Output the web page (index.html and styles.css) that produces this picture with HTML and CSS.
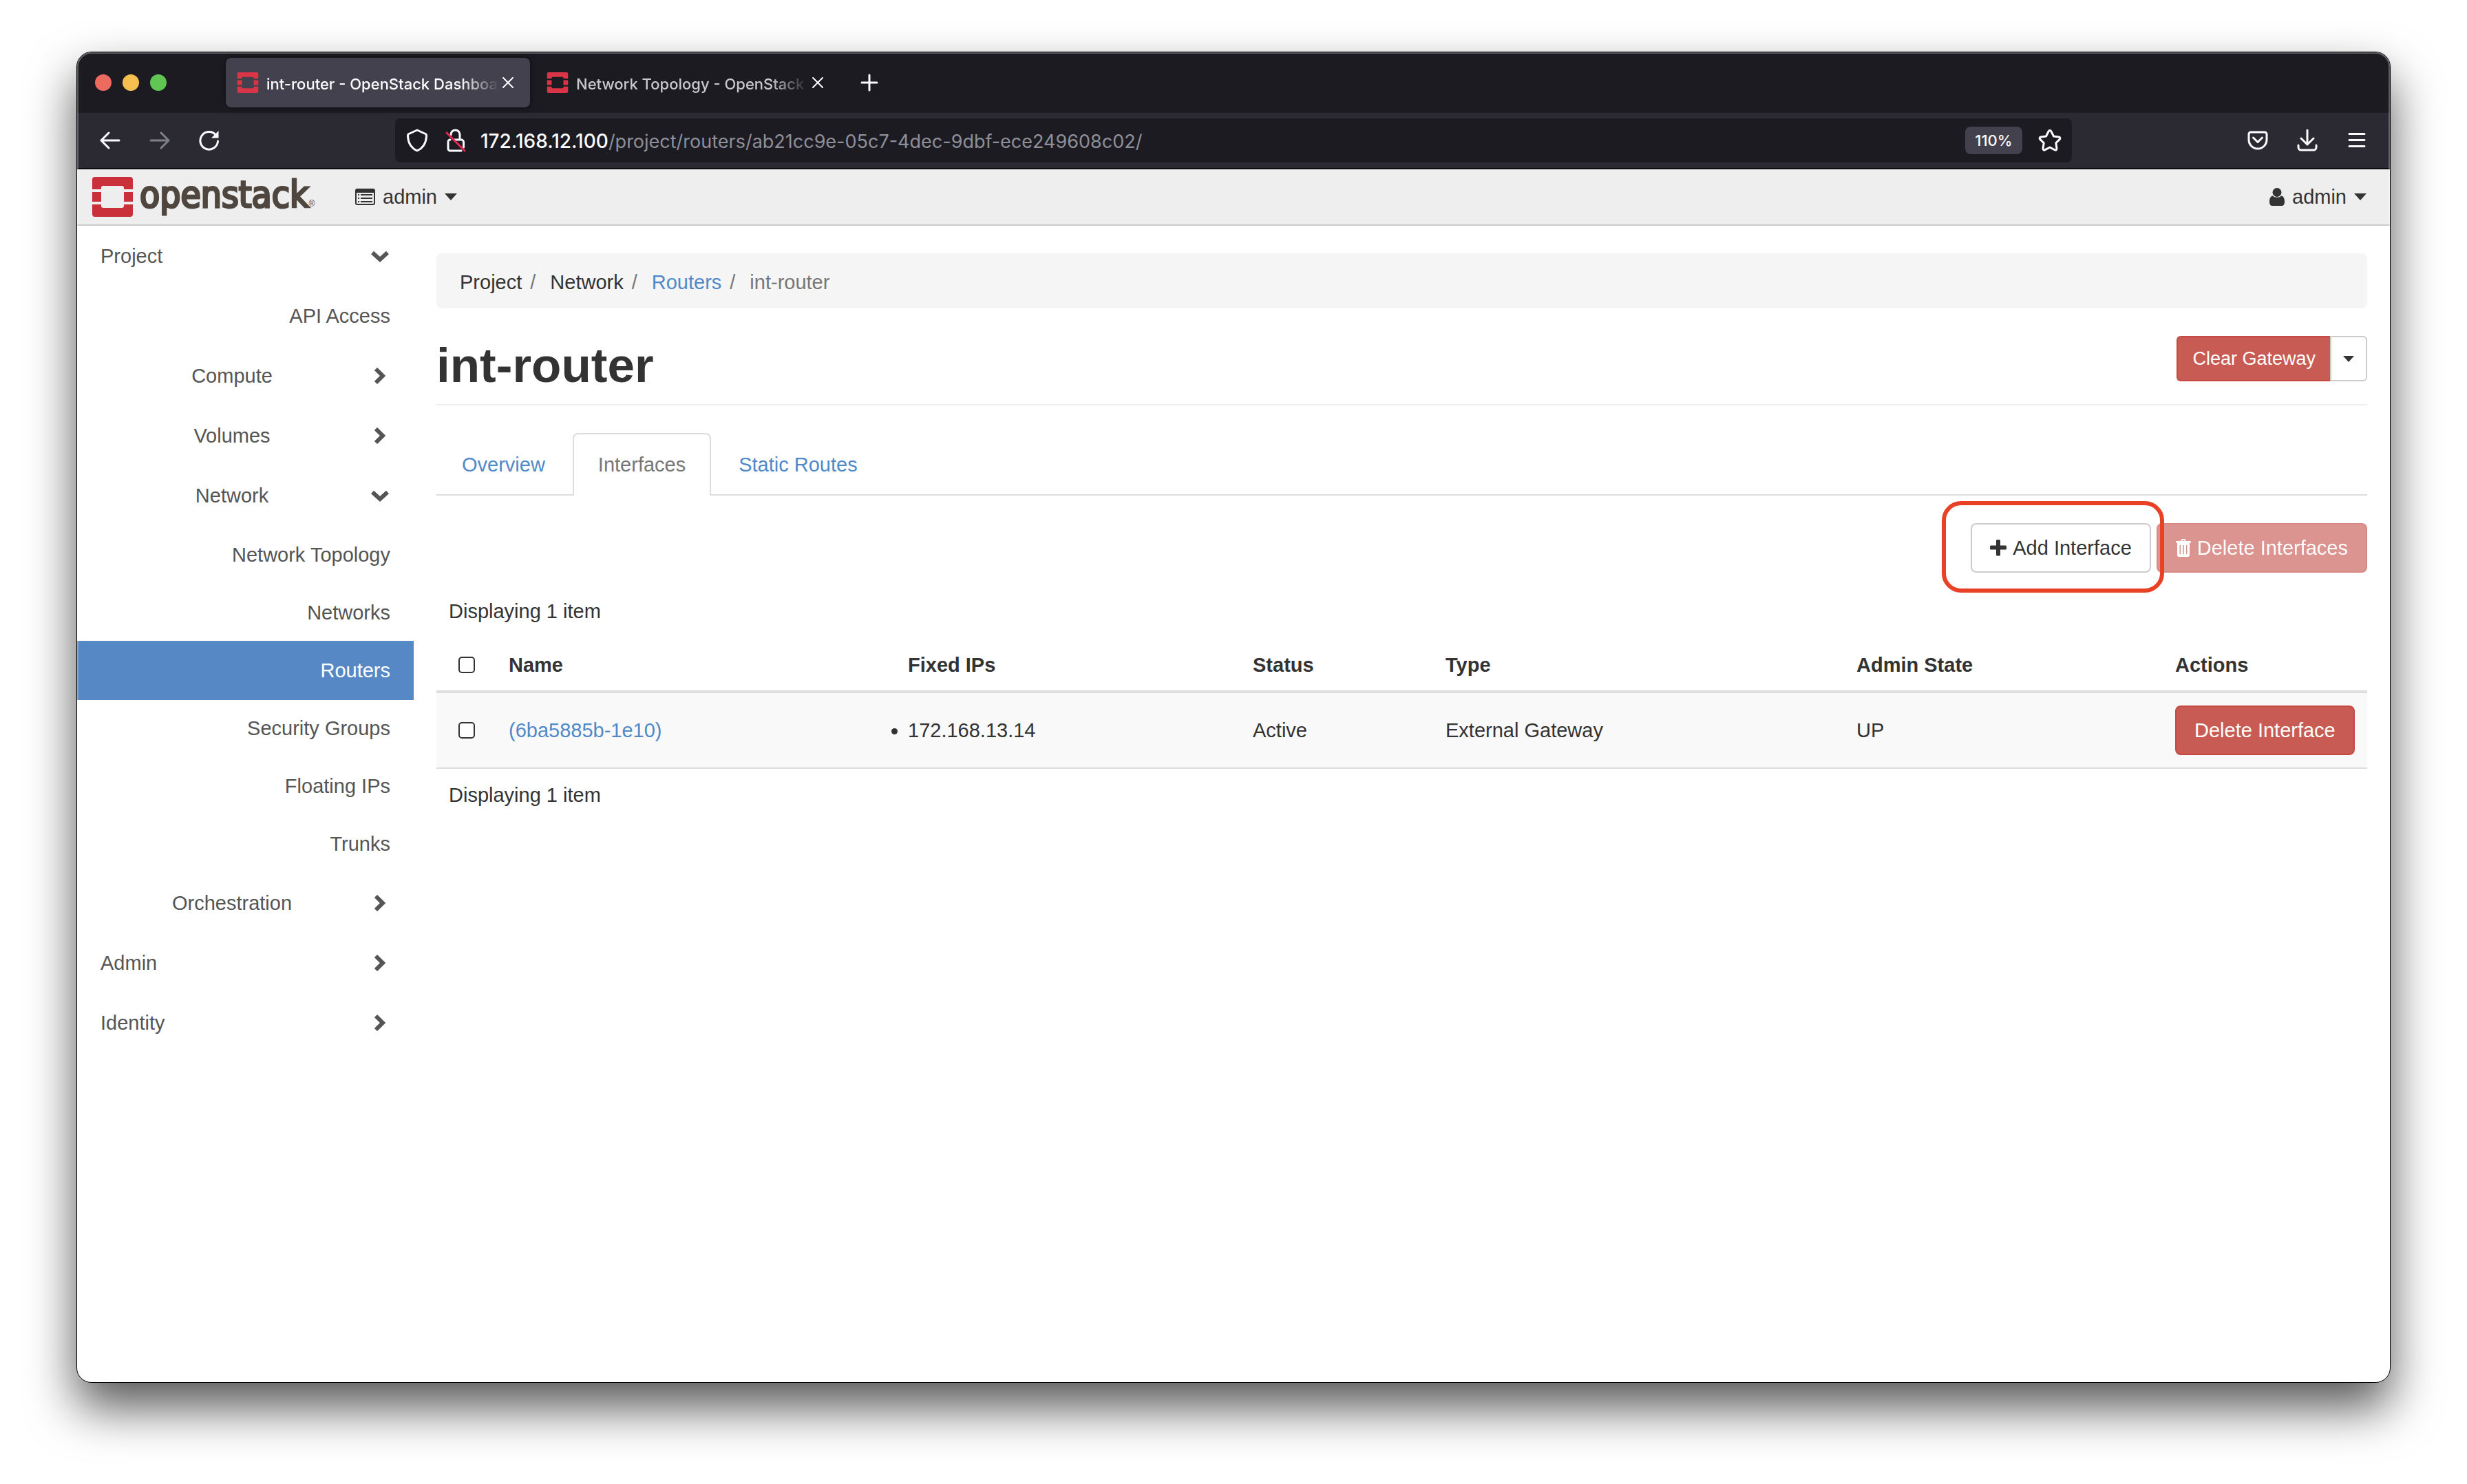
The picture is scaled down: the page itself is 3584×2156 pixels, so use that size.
FILE: index.html
```html
<!DOCTYPE html>
<html lang="en">
<head>
<meta charset="utf-8">
<title>int-router - OpenStack Dashboard</title>
<link rel="stylesheet" href="styles.css">
</head>
<body>
<svg class="sprite" aria-hidden="true">
  <symbol id="os-mark" viewBox="0 0 59 58">
    <path d="M4 0H55a4 4 0 0 1 4 4V18H46V16a3 3 0 0 0-3-3H16a3 3 0 0 0-3 3V18H0V4a4 4 0 0 1 4-4ZM0 22H13V36H0ZM46 22H59V36H46ZM0 40H13V42a3 3 0 0 0 3 3H43a3 3 0 0 0 3-3V40H59V54a4 4 0 0 1-4 4H4a4 4 0 0 1-4-4Z"/>
  </symbol>
  <symbol id="close" viewBox="0 0 16 16"><path d="M1 1L15 15M15 1L1 15" fill="none" stroke="currentColor" stroke-width="2" stroke-linecap="round"/></symbol>
  <symbol id="caret" viewBox="0 0 18 10"><path d="M0 0H18L9 10Z"/></symbol>
  <symbol id="chev-right" viewBox="0 0 26 26"><path d="M7 3L17 13L7 23" fill="none" stroke="currentColor" stroke-width="6"/></symbol>
  <symbol id="chev-down" viewBox="0 0 26 26"><path d="M2 8L13 18L24 8" fill="none" stroke="currentColor" stroke-width="6"/></symbol>
</svg>
<div class="window">
  <div class="tabstrip">
    <div class="lights"><span class="light red"></span><span class="light amber"></span><span class="light green"></span></div>
    <div class="tab current">
      <svg class="favicon"><use href="#os-mark"/></svg>
      <span class="tab-title">int-router - OpenStack Dashboard</span>
      <button class="tab-close" aria-label="Close tab"><svg><use href="#close"/></svg></button>
    </div>
    <div class="tab">
      <svg class="favicon"><use href="#os-mark"/></svg>
      <span class="tab-title">Network Topology - OpenStack Dashboard</span>
      <button class="tab-close" aria-label="Close tab"><svg><use href="#close"/></svg></button>
    </div>
    <button class="new-tab" aria-label="New tab"><svg width="26" height="26" viewBox="0 0 26 26"><path d="M13 2V24M2 13H24"/></svg></button>
  </div>

  <div class="toolbar">
    <div class="nav-buttons">
      <button aria-label="Back"><svg width="32" height="32" viewBox="0 0 32 32"><path d="M29 16H3M14 5L3 16L14 27"/></svg></button>
      <button aria-label="Forward" disabled><svg width="32" height="32" viewBox="0 0 32 32"><path d="M3 16H29M18 5L29 16L18 27"/></svg></button>
      <button aria-label="Reload"><svg width="32" height="32" viewBox="0 0 32 32"><path d="M28.500 17A12.800 12.800 0 1 1 25 7.500"/><path d="M29.500 2V12.500H19Z" fill="#fbfbfe" stroke="none"/></svg></button>
    </div>
    <div class="urlbar">
      <svg width="32" height="36" viewBox="0 0 32 36"><path d="M16 3L28 8.500C29.500 9 29.600 10.500 29.500 12C29 21 25 29 16 33C7 29 3 21 2.500 12C2.400 10.500 2.500 9 4 8.500Z"/></svg>
      <svg width="32" height="36" viewBox="0 0 32 36"><path d="M9 10V9.500A6.500 6.500 0 0 1 22 9.500V17M14 17H24A3.500 3.500 0 0 1 27.500 20.500V28M24 33H8A3 3 0 0 1 5 30V20A3 3 0 0 1 8 17"/><path class="slash" d="M3 7L29 33"/></svg>
      <div class="url" role="textbox" aria-label="Address"><span class="host">172.168.12.100</span>/project/routers/ab21cc9e-05c7-4dec-9dbf-ece249608c02/</div>
      <button class="zoom">110%</button>
      <button class="star" aria-label="Bookmark"><svg width="36" height="36" viewBox="0 0 36 36"><path d="M18 3.500C19 3.500 19.500 4 20 5L23.500 12L31 13C33 13.400 33.600 15 32 16.600L26.800 21.800L28 29.500C28.200 31.700 26.800 32.700 25 31.700L18 28L11 31.700C9.200 32.700 7.800 31.700 8 29.500L9.200 21.800L4 16.600C2.400 15 3 13.400 5 13L12.500 12L16 5C16.500 4 17 3.500 18 3.500Z"/></svg></button>
    </div>
    <div class="tools">
      <button aria-label="Save to Pocket"><svg width="32" height="32" viewBox="0 0 32 32"><path d="M6 4H26A3 3 0 0 1 29 7V15A13 13 0 0 1 3 15V7A3 3 0 0 1 6 4ZM9.500 12L16 18.500L22.500 12"/></svg></button>
      <button aria-label="Downloads"><svg width="32" height="32" viewBox="0 0 32 32"><path d="M16 1V21M7 13L16 22L25 13M3 23V26A4 4 0 0 0 7 30H25A4 4 0 0 0 29 26V23"/></svg></button>
      <button aria-label="Menu"><svg width="32" height="32" viewBox="0 0 32 32"><path d="M5 6.500H27M5 15.500H27M5 24.500H27"/></svg></button>
    </div>
  </div>

  <header class="topbar">
    <a class="brand" href="#"><svg class="brand-mark"><use href="#os-mark"/></svg><span class="wordmark">openstack</span><span class="reg">®</span></a>
    <button class="picker"><svg width="29" height="24" viewBox="0 0 29 24"><path fill-rule="evenodd" d="M3 0H26A3 3 0 0 1 29 3V21A3 3 0 0 1 26 24H3A3 3 0 0 1 0 21V3A3 3 0 0 1 3 0ZM2 6V21A1 1 0 0 0 3 22H26A1 1 0 0 0 27 21V6Z"/><path d="M4 8H6V10H4ZM4 13H6V15H4ZM4 18H6V20H4ZM8 8H25V10H8ZM8 13H25V15H8ZM8 18H25V20H8Z"/></svg>admin<svg class="caret"><use href="#caret"/></svg></button>
    <button class="picker user"><svg width="22" height="26" viewBox="0 0 22 26"><circle cx="11" cy="6.500" r="6.500"/><path d="M5 11.500C7 14.500 15 14.500 17 11.500C21 12 22 16 22 20.500C22 24 20.500 26 18 26H4C1.500 26 0 24 0 20.500C0 16 1 12 5 11.500Z"/></svg>admin<svg class="caret"><use href="#caret"/></svg></button>
  </header>

  <div class="layout">
    <nav class="sidebar">
      <a class="top" href="#">Project<svg><use href="#chev-down"/></svg></a>
      <a class="leaf tall" href="#">API Access</a>
      <a class="group" href="#"><span>Compute</span><svg><use href="#chev-right"/></svg></a>
      <a class="group" href="#"><span>Volumes</span><svg><use href="#chev-right"/></svg></a>
      <a class="group" href="#"><span>Network</span><svg><use href="#chev-down"/></svg></a>
      <a class="leaf" href="#">Network Topology</a>
      <a class="leaf" href="#">Networks</a>
      <a class="leaf active" href="#">Routers</a>
      <a class="leaf" href="#">Security Groups</a>
      <a class="leaf" href="#">Floating IPs</a>
      <a class="leaf" href="#">Trunks</a>
      <a class="group" href="#"><span>Orchestration</span><svg><use href="#chev-right"/></svg></a>
      <a class="top" href="#">Admin<svg><use href="#chev-right"/></svg></a>
      <a class="top" href="#">Identity<svg><use href="#chev-right"/></svg></a>
    </nav>

    <main>
      <ol class="breadcrumb">
        <li>Project</li>
        <li>Network</li>
        <li><a href="#">Routers</a></li>
        <li class="here">int-router</li>
      </ol>
      <div class="page-header">
        <h1>int-router</h1>
        <div class="split"><button class="btn small danger">Clear Gateway</button><button class="btn small toggle" aria-label="More actions"><svg><use href="#caret"/></svg></button></div>
      </div>
      <ul class="tabs">
        <li><a href="#">Overview</a></li>
        <li class="active"><a href="#">Interfaces</a></li>
        <li><a href="#">Static Routes</a></li>
      </ul>
      <div class="actions">
        <div class="marked"><button class="btn"><svg width="24" height="24" viewBox="0 0 24 24"><path d="M9 1.500A1.500 1.500 0 0 1 10.500 0H13.500A1.500 1.500 0 0 1 15 1.500V8.500H22.500A1.500 1.500 0 0 1 24 10V13A1.500 1.500 0 0 1 22.500 14.500H15V22A1.500 1.500 0 0 1 13.500 23.500H10.500A1.500 1.500 0 0 1 9 22V14.500H1.500A1.500 1.500 0 0 1 0 13V10A1.500 1.500 0 0 1 1.500 8.500H9Z"/></svg>Add Interface</button></div>
        <button class="btn danger" disabled><svg width="22" height="26" viewBox="0 0 22 26"><path fill-rule="evenodd" d="M7 3L8 1Q8.500 0 10 0H12Q13.500 0 14 1L15 3H21Q22 3 22 4V5.500H20V23Q20 26 17.500 26H4.500Q2 26 2 23V5.500H0V4Q0 3 1 3ZM9 3H13L12.500 2H9.500ZM5.500 9V22H7V9ZM10.200 9V22H11.800V9ZM15 9V22H16.500V9Z"/></svg>Delete Interfaces</button>
      </div>
      <p class="count">Displaying 1 item</p>
      <table>
        <colgroup><col class="c-check"><col class="c-name"><col class="c-ips"><col class="c-status"><col class="c-type"><col class="c-admin"><col class="c-actions"></colgroup>
        <thead>
          <tr><th><input type="checkbox" aria-label="Select all"></th><th>Name</th><th>Fixed IPs</th><th>Status</th><th>Type</th><th>Admin State</th><th>Actions</th></tr>
        </thead>
        <tbody>
          <tr><td><input type="checkbox" aria-label="Select (6ba5885b-1e10)"></td><td><a href="#">(6ba5885b-1e10)</a></td><td><ul class="ips"><li>172.168.13.14</li></ul></td><td>Active</td><td>External Gateway</td><td>UP</td><td><button class="btn danger">Delete Interface</button></td></tr>
        </tbody>
      </table>
      <p class="count foot">Displaying 1 item</p>
    </main>
  </div>
</div>
</body>
</html>
```
FILE: styles.css
```css
* { box-sizing: border-box; }
body {
  margin: 0;
  min-height: 100vh;
  padding: 75px 111px 147px;
  display: flex;
  background: #fff;
  color: #333;
  font: 29px/44px "Liberation Sans", Arial, sans-serif;
}
button { margin: 0; padding: 0; border: 0; background: none; color: inherit; font: inherit; display: flex; align-items: center; justify-content: center; }
a { color: #5089c8; text-decoration: none; }
ul, ol { list-style: none; margin: 0; padding: 0; }
svg { flex: none; fill: currentColor; }
.sprite { position: absolute; width: 0; height: 0; }

.window {
  flex: 1;
  min-width: 0;
  position: relative;
  border: 1px solid #000;
  border-radius: 22px;
  background: #fff;
  overflow: hidden;
  box-shadow: 0 36px 70px rgba(0, 0, 0, .66);
}
.window::after {
  content: "";
  position: absolute;
  inset: 0;
  border: 2px solid rgba(255, 255, 255, .28);
  border-radius: 21px;
  pointer-events: none;
}

/* browser chrome */
.tabstrip {
  height: 88px;
  display: flex;
  align-items: center;
  padding-left: 26px;
  background: #1c1b22;
  color: #fbfbfe;
  font: 500 22px/32px Inter, sans-serif;
}
.lights { display: flex; gap: 16px; width: 190px; }
.light { width: 24px; height: 24px; border-radius: 50%; }
.red { background: #ed6a5e; }
.amber { background: #f5bf4f; }
.green { background: #61c554; }
.tab {
  width: 442px;
  height: 72px;
  display: flex;
  align-items: center;
  padding: 0 24px 0 16px;
  margin-right: 8px;
  border-radius: 8px;
  color: #c8c8cc;
}
.tab.current { background: #42414d; color: #fbfbfe; box-shadow: 0 0 8px rgba(0, 0, 0, .5); }
.favicon { width: 32px; height: 30px; margin-right: 11px; color: #da3447; }
.tab-title {
  flex: 1;
  min-width: 0;
  padding-top: 3px;
  overflow: hidden;
  white-space: nowrap;
  -webkit-mask-image: linear-gradient(to left, transparent, #000 56px);
  mask-image: linear-gradient(to left, transparent, #000 56px);
}
.tab-close { color: #fbfbfe; margin-left: 4px; }
.tab-close svg { width: 16px; height: 16px; }
.new-tab { margin-left: 22px; }

.toolbar {
  height: 82px;
  display: flex;
  align-items: center;
  padding: 0 32px;
  border-bottom: 2px solid #0c0c0d;
  background: #2b2a33;
  color: #fbfbfe;
}
.toolbar svg, .new-tab svg { fill: none; stroke: currentColor; stroke-width: 3; stroke-linecap: round; stroke-linejoin: round; }
.toolbar .slash { stroke: #e22850; }
.nav-buttons { display: flex; gap: 40px; width: 430px; }
.nav-buttons button:disabled { color: #80808a; }
.urlbar {
  flex: 1;
  height: 64px;
  display: flex;
  align-items: center;
  gap: 24px;
  padding: 0 14px 0 16px;
  border-radius: 8px;
  background: #1c1b22;
}
.url { flex: 1; margin-left: -4px; padding-top: 2px; color: #8f8f99; font: 27px/40px Inter, sans-serif; white-space: nowrap; }
.host { color: #fbfbfe; font-size: 28px; font-weight: 500; }
.zoom { width: 83px; height: 40px; border-radius: 8px; background: #42414d; font: 500 22px/40px Inter, sans-serif; }
.urlbar .zoom { margin-right: -2px; }
.tools { display: flex; gap: 40px; padding-left: 254px; }

/* dashboard top bar */
.topbar {
  height: 82px;
  display: flex;
  align-items: center;
  padding: 0 34px 0 22px;
  border-bottom: 2px solid #ccc;
  background: #eee;
}
.brand { display: flex; align-items: center; width: 382px; color: #c9303a; }
.brand-mark { width: 59px; height: 58px; margin-right: 10px; }
.wordmark {
  padding-bottom: 6px;
  color: #4f473f;
  font: 53px/60px "DejaVu Sans Condensed", "DejaVu Sans", sans-serif;
  -webkit-text-stroke: 3px #4f473f;
}
.reg { padding-top: 20px; color: #4f473f; font-size: 12px; line-height: 14px; }
.picker { gap: 11px; }
.picker.user { margin-left: auto; }
.caret { width: 18px; height: 10px; }

.layout { display: flex; }

/* side navigation */
.sidebar { flex: 0 0 489px; }
.sidebar a { display: flex; align-items: center; height: 87px; padding: 0 34px; color: #555; }
.sidebar svg { width: 26px; height: 26px; margin-right: 2px; }
.sidebar .top { justify-content: space-between; }
.sidebar .group span { flex: 1; padding-right: 11px; text-align: center; }
.sidebar .leaf { height: 84px; justify-content: flex-end; }
.sidebar .group + .leaf { margin-top: 1px; }
.sidebar .tall { height: 87px; }
.sidebar .active { height: 86px; margin: -1px 0; background: #5588c4; color: #fff; }

/* content */
main { flex: 1; min-width: 0; padding: 40px 33px; }
.breadcrumb { display: flex; padding: 20px 34px 16px; border-radius: 8px; background: #f5f5f5; }
.breadcrumb li + li::before { content: "/"; padding: 0 21px 0 12px; color: #777; }
.breadcrumb .here { color: #777; }

.page-header { display: flex; justify-content: space-between; align-items: flex-start; margin-top: 40px; padding-bottom: 13px; border-bottom: 2px solid #eee; }
h1 { margin: 0; font-size: 71px; line-height: 86px; font-weight: bold; }

.btn {
  height: 72px;
  padding: 0 26px;
  gap: 9px;
  border: 2px solid #ccc;
  border-radius: 8px;
  background: #fff;
  color: #333;
  white-space: nowrap;
}
.btn.danger { border-color: #c54b42; background: #c85c54; color: #fff; }
.btn:disabled { opacity: .65; }
.btn.small { height: 66px; padding: 0 21px; border-radius: 6px; font-size: 27px; }
.split { display: flex; }
.split .btn:first-child { border-radius: 6px 0 0 6px; border-right: 0; }
.split .toggle { width: 54px; padding: 0; border-radius: 0 6px 6px 0; }
.toggle svg { width: 16px; height: 9px; }

.tabs { display: flex; gap: 3px; margin-top: 40px; border-bottom: 2px solid #ddd; }
.tabs li { margin-bottom: -2px; }
.tabs a { display: block; height: 91px; padding: 0 35px; border: 2px solid transparent; border-bottom: 0; border-radius: 8px 8px 0 0; line-height: 89px; }
.tabs .active a { border-color: #ddd; background: #fff; color: #777; }

.actions { display: flex; justify-content: flex-end; gap: 8px; margin-top: 40px; }
.marked { position: relative; z-index: 1; }
.marked::after {
  content: "";
  position: absolute;
  inset: -32px -19px -29px -42px;
  border: 6px solid #e94126;
  border-radius: 28px;
  pointer-events: none;
}

.count { margin: 34px 0 19px; padding-left: 18px; }
.count.foot { margin: 16px 0 0; }

table { width: 100%; table-layout: fixed; border-collapse: separate; border-spacing: 0; }
.c-check { width: 87px; }
.c-name { width: 580px; }
.c-ips { width: 501px; }
.c-status { width: 280px; }
.c-type { width: 597px; }
.c-admin { width: 463px; }
.c-actions { width: 297px; }
th, td { padding: 0 18px; text-align: left; vertical-align: middle; white-space: nowrap; }
th { height: 78px; border-bottom: 4px solid #ddd; }
td { height: 110px; border-bottom: 2px solid #ddd; background: #f9f9f9; }
th:first-child, td:first-child { padding-left: 32px; }
.ips { list-style: disc; }
input[type="checkbox"] {
  appearance: none;
  display: block;
  width: 24px;
  height: 24px;
  margin: 0;
  border: 2px solid #333;
  border-radius: 5px;
  background: #fff;
}
```
